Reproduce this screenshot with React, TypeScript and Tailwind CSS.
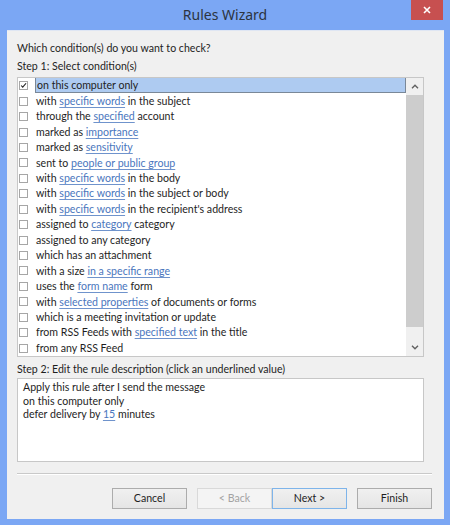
import React from 'react'

type Part = string | { link: string }

const conditions: Part[][] = [
  ['on this computer only'],
  ['with ', { link: 'specific words' }, ' in the subject'],
  ['through the ', { link: 'specified' }, ' account'],
  ['marked as ', { link: 'importance' }],
  ['marked as ', { link: 'sensitivity' }],
  ['sent to ', { link: 'people or public group' }],
  ['with ', { link: 'specific words' }, ' in the body'],
  ['with ', { link: 'specific words' }, ' in the subject or body'],
  ['with ', { link: 'specific words' }, " in the recipient's address"],
  ['assigned to ', { link: 'category' }, ' category'],
  ['assigned to any category'],
  ['which has an attachment'],
  ['with a size ', { link: 'in a specific range' }],
  ['uses the ', { link: 'form name' }, ' form'],
  ['with ', { link: 'selected properties' }, ' of documents or forms'],
  ['which is a meeting invitation or update'],
  ['from RSS Feeds with ', { link: 'specified text' }, ' in the title'],
  ['from any RSS Feed'],
]

function Parts({ parts }: { parts: Part[] }) {
  return (
    <>
      {parts.map((p, i) =>
        typeof p === 'string' ? (
          <span key={i} className="whitespace-pre">{p}</span>
        ) : (
          <span key={i} className="whitespace-pre text-[#4a76bd] underline underline-offset-[2px] decoration-[#6f93cc]">
            {p.link}
          </span>
        )
      )}
    </>
  )
}

function Checkbox({ checked }: { checked?: boolean }) {
  return (
    <div className="w-[9px] h-[9px] border border-[#a6a6a6] bg-white flex items-center justify-center shrink-0">
      {checked && (
        <svg width="9" height="9" viewBox="0 0 9 9" fill="none">
          <path d="M1.5 4.5l2 2.2L7.8 1.6" stroke="#222" strokeWidth="1.4" />
        </svg>
      )}
    </div>
  )
}

function Chevron({ up }: { up?: boolean }) {
  return (
    <svg width="8" height="5" viewBox="0 0 8 5" fill="none">
      <path d={up ? 'M1 4.2L4 1.2l3 3' : 'M1 0.8l3 3 3-3'} stroke="#606060" strokeWidth="1.4" />
    </svg>
  )
}

function Button({ label, kind }: { label: string; kind?: 'default' | 'disabled' }) {
  const border =
    kind === 'default' ? 'border-[#7eb4ea]' : kind === 'disabled' ? 'border-[#d9d9d9]' : 'border-[#acacac]'
  const text = kind === 'disabled' ? 'text-[#a3a3a3]' : 'text-[#1e1e1e]'
  const bg = kind === 'disabled' ? 'bg-[#f4f4f4]' : 'bg-gradient-to-b from-[#f0f0f0] to-[#e5e5e5]'
  return (
    <div className={`w-[75px] h-[21px] border ${border} ${bg} ${text} flex items-center justify-center`}>
      {label}
    </div>
  )
}

export default function App() {
  return (
    <div className="w-[450px] h-[525px] bg-[#7ba7f4] flex flex-col font-['Lato',sans-serif] text-[#1e1e1e] overflow-hidden">
      {/* Title bar */}
      <div className="h-[30px] relative flex items-center justify-center shrink-0">
        <span className="text-[14px] text-[#2c3440] font-['Noto_Sans',sans-serif] leading-none">Rules Wizard</span>
        <div className="absolute right-[7px] top-0 w-[32px] h-[20px] bg-[#c75050] flex items-center justify-center">
          <svg width="8" height="8" viewBox="0 0 8 8">
            <path d="M1 1l6 6M7 1L1 7" stroke="#fff" strokeWidth="1.6" />
          </svg>
        </div>
      </div>

      {/* Client area */}
      <div className="ml-[7px] mr-[6px] mb-[6px] flex-1 bg-[#f0f0f0] border-t border-[#dfe6f3] pl-[10px] pr-[12px] pt-[8px] flex flex-col text-[10.6px]">
        <div className="h-[18px] leading-[18px]">Which condition(s) do you want to check?</div>
        <div className="h-[18px] leading-[18px]">Step 1: Select condition(s)</div>

        {/* Condition list */}
        <div className="mt-[2px] w-[407px] h-[280px] bg-white border border-[#c7c7c7] flex">
          <div className="flex-1 flex flex-col">
            {conditions.map((parts, i) => (
              <div key={i} className="h-[15.5px] flex items-center pl-[1px]">
                <Checkbox checked={i === 0} />
                <div
                  className={`ml-[7px] h-full flex-1 flex items-center pl-[1px] leading-none ${
                    i === 0 ? 'bg-[#aecbf1] border-l border-r border-b border-[#7a8898]' : ''
                  }`}
                >
                  <Parts parts={parts} />
                </div>
              </div>
            ))}
          </div>
          {/* Scrollbar */}
          <div className="w-[17px] bg-[#f0f0f0] flex flex-col">
            <div className="h-[17px] flex items-center justify-center">
              <Chevron up />
            </div>
            <div className="h-[232px] bg-[#cdcdcd]" />
            <div className="flex-1" />
            <div className="h-[17px] flex items-center justify-center">
              <Chevron />
            </div>
          </div>
        </div>

        <div className="mt-[3px] h-[18px] leading-[18px]">Step 2: Edit the rule description (click an underlined value)</div>

        {/* Rule description */}
        <div className="w-[407px] h-[84px] bg-white border border-[#c7c7c7] pl-[5px] pt-[2px] leading-[13.5px]">
          <div>Apply this rule after I send the message</div>
          <div>on this computer only</div>
          <div>
            defer delivery by <Parts parts={[{ link: '15' }]} /> minutes
          </div>
        </div>

        <div className="mt-[11px] border-t border-[#c9c9c9] border-b border-b-white" />

        <div className="mt-[13px] flex justify-end">
          <Button label="Cancel" />
          <div className="ml-[10px] flex">
            <Button label="< Back" kind="disabled" />
            <Button label="Next >" kind="default" />
          </div>
          <div className="ml-[10px]">
            <Button label="Finish" />
          </div>
        </div>
      </div>
    </div>
  )
}
